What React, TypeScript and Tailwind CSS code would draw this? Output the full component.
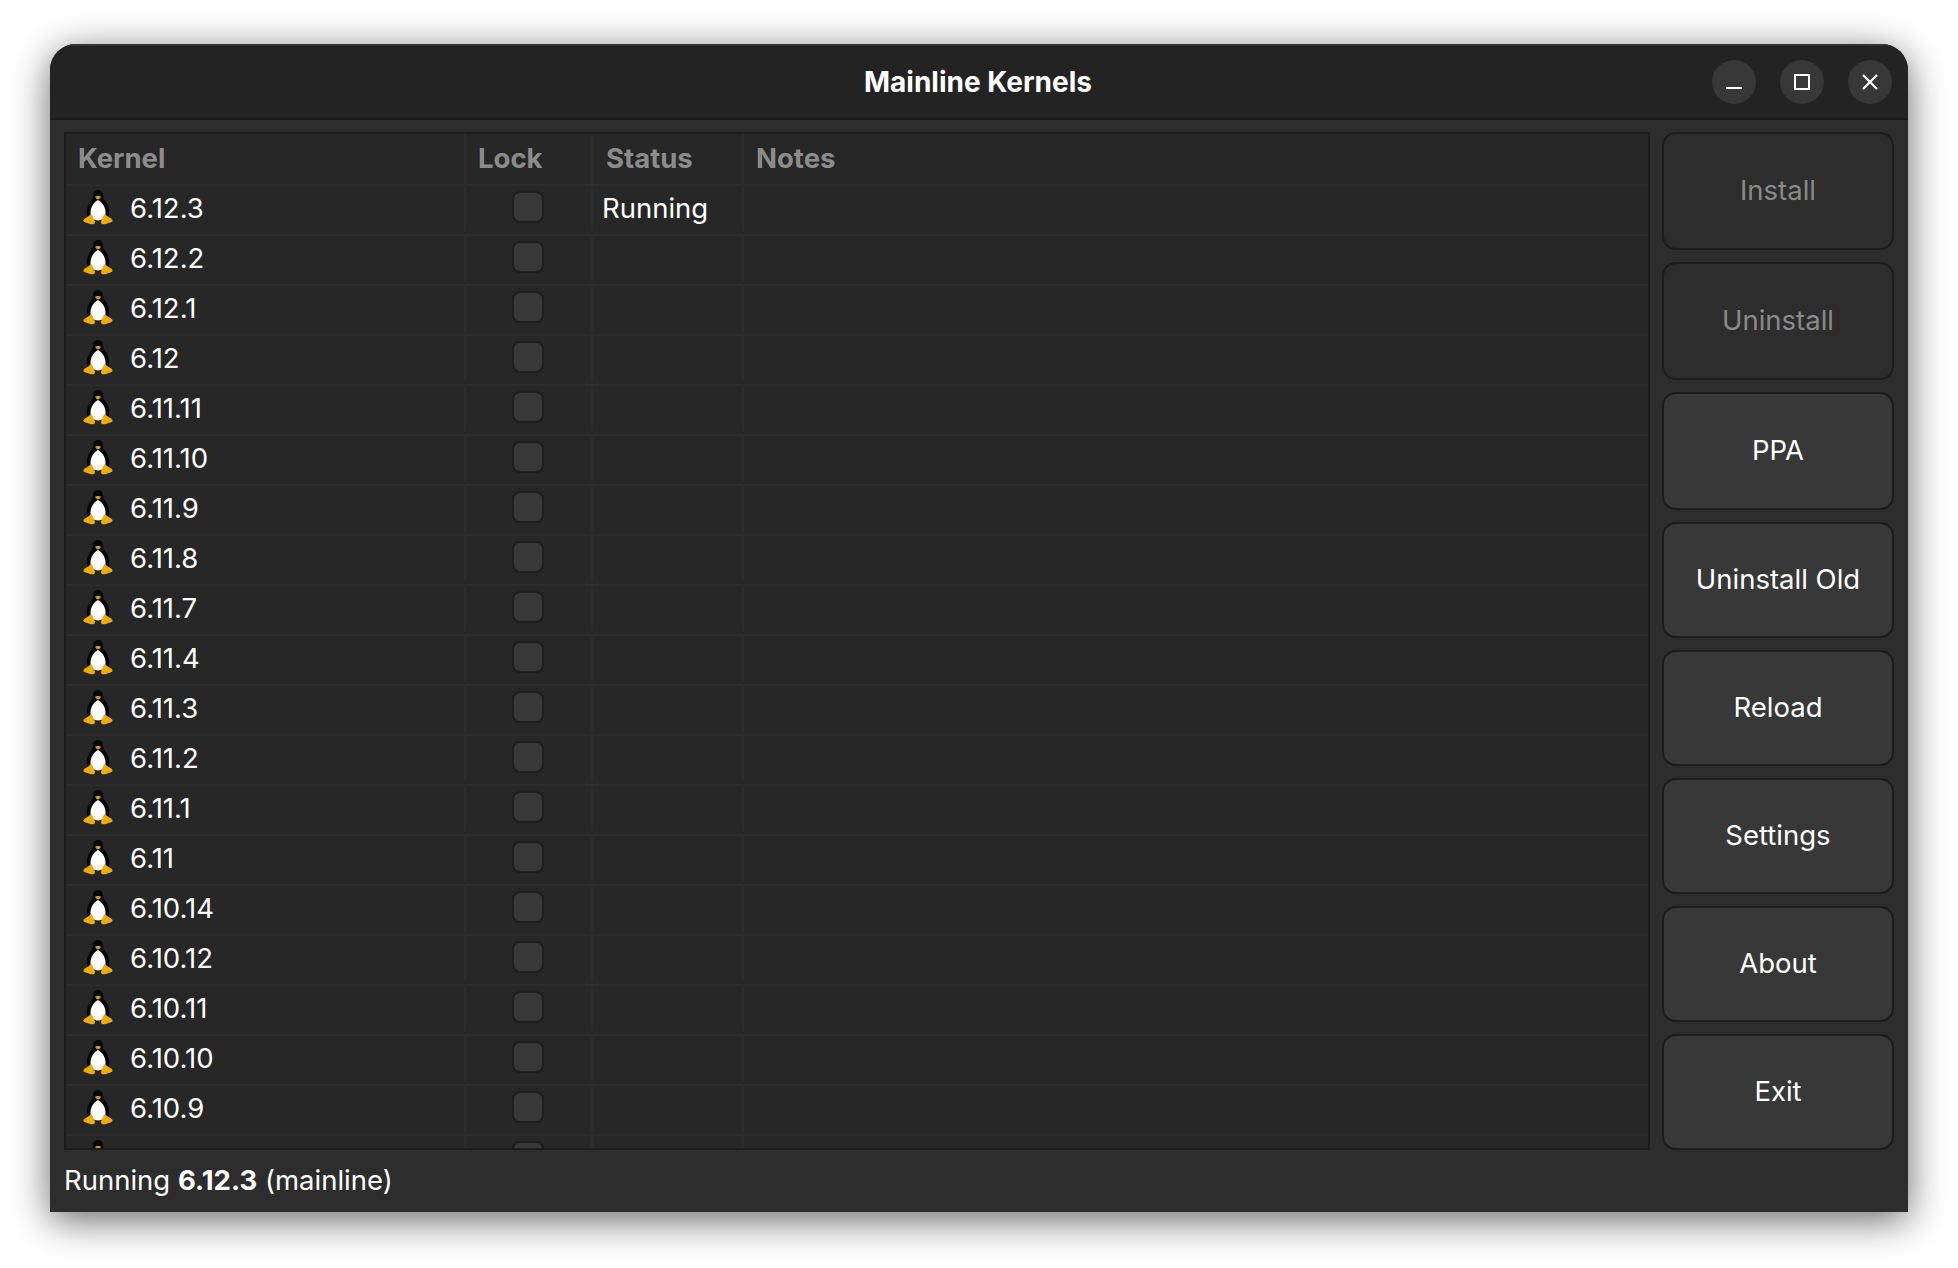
import React from "react";

const kernels = ["6.12.3","6.12.2","6.12.1","6.12","6.11.11","6.11.10","6.11.9","6.11.8","6.11.7","6.11.4","6.11.3","6.11.2","6.11.1","6.11","6.10.14","6.10.12","6.10.11","6.10.10","6.10.9","6.10.8"];

const buttons: { label: string; disabled?: boolean; h: string }[] = [
  { label: "Install", disabled: true, h: "h-[118px]" },
  { label: "Uninstall", disabled: true, h: "h-[118px]" },
  { label: "PPA", h: "h-[118px]" },
  { label: "Uninstall Old", h: "h-[116px]" },
  { label: "Reload", h: "h-[116px]" },
  { label: "Settings", h: "h-[116px]" },
  { label: "About", h: "h-[116px]" },
  { label: "Exit", h: "h-[116px]" },
];

function Tux() {
  return (
    <svg width="32" height="36" viewBox="0 0 32 36" className="mb-[4px] shrink-0 blur-[0.5px]">
      <path d="M16 1c-3 0-5 2.300-5 5.200 0 2.300-.8 3.800-2.200 5.600C6.600 14.800 4.500 19 4.800 24.500c.2 2.800 1.500 5.300 3.700 7h15c2.200-1.700 3.500-4.200 3.700-7 .3-5.500-1.800-9.700-4-12.700C21.800 10 21 8.500 21 6.200 21 3.300 19 1 16 1z" fill="#060606" />
      <path d="M16 11c-3.200 1.300-7.500 6.500-7.500 12.500 0 4.700 3 8 7.500 8s7.500-3.300 7.500-8C23.500 17.500 19.200 12.300 16 11z" fill="#fdfdfd" />
      <path d="M13.300 7.500c1-.7 4.400-.7 5.400 0 .3 1-1.700 3-2.700 3s-3-2-2.700-3z" fill="#d9a012" />
      <path d="M8.500 25.500C7 27.300 4.500 28.300 2.500 29.700.8 31 1 32.700 3.500 33.500c2.700.8 5 1.800 7 1.800 2.200 0 3-1.500 2.200-3.500-.8-2-1.800-4.300-2.700-5.800-.5-.9-1.400-1.200-1.500-.5z" fill="#eeab0a" />
      <path d="M23.500 25.500c1.500 1.800 4 2.800 6 4.200 1.700 1.300 1.500 3-1 3.800-2.700.8-5 1.800-7 1.800-2.200 0-3-1.500-2.200-3.500.8-2 1.800-4.300 2.700-5.800.5-.9 1.400-1.200 1.500-.5z" fill="#eeab0a" />
    </svg>
  );
}

function Row({ name, status }: { name: string; status?: string }) {
  return (
    <div className="flex h-[50px] shrink-0 border-b-2 border-[#2d2d2d] pb-[3px]">
      <div className="flex w-[400px] shrink-0 items-center gap-[16px] border-r-2 border-[#2c2c2c] pl-[16px]">
        <Tux />
        <span>{name}</span>
      </div>
      <div className="flex w-[127px] shrink-0 items-center justify-center border-r-2 border-[#2c2c2c] pr-[2px]">
        <div className="mb-[3px] h-[32px] w-[32px] rounded-lg border-2 border-[#1e1e1e] bg-[#383838]" />
      </div>
      <div className="flex w-[151px] shrink-0 items-center border-r-2 border-[#2c2c2c] pl-[9px]">{status}</div>
      <div className="flex-1" />
    </div>
  );
}

export default function App() {
  return (
    <div className="h-[1268px] w-[1958px] overflow-hidden bg-white pl-[50px] pt-[44px] font-['Inter',sans-serif] text-[27.5px] leading-none text-white">
      <div className="flex h-[1168px] w-[1858px] flex-col overflow-hidden rounded-t-[26px] bg-[#2d2d2d] shadow-[0_8px_38px_rgba(0,0,0,0.6)]">
        <header className="relative flex h-[76px] shrink-0 items-center justify-center border-b-2 border-[#1a1a1a] bg-[#232323] pt-[2px] pr-[2px] shadow-[inset_0_2px_0_#333333]">
          <h1 className="text-[28px] font-bold">Mainline Kernels</h1>
          <div className="absolute right-[16px] top-[16px] flex gap-[24px]">
            <div className="flex h-[44px] w-[44px] items-center justify-center rounded-full bg-[#383838]">
              <svg width="16" height="16" viewBox="0 0 16 16"><path d="M0 14h16" stroke="white" strokeWidth="2" /></svg>
            </div>
            <div className="flex h-[44px] w-[44px] items-center justify-center rounded-full bg-[#383838]">
              <svg width="16" height="16" viewBox="0 0 16 16"><path d="M1 1h14v14H1z" fill="none" stroke="white" strokeWidth="2" /></svg>
            </div>
            <div className="flex h-[44px] w-[44px] items-center justify-center rounded-full bg-[#383838]">
              <svg width="16" height="16" viewBox="0 0 16 16"><path d="M1 1l14 14M15 1L1 15" stroke="white" strokeWidth="2.200" /></svg>
            </div>
          </div>
        </header>
        <div className="flex min-h-0 flex-1 gap-[12px] pl-[14px] pt-[12px]">
          <div className="flex h-[1018px] w-[1586px] shrink-0 flex-col overflow-hidden border-2 border-[#1c1c1c] bg-[#272727]">
            <div className="flex h-[52px] shrink-0 border-b-2 border-[#2d2d2d] font-bold text-[#8c8c8c]">
              <div className="flex w-[400px] shrink-0 items-center border-r-2 border-[#2c2c2c] pl-[12px]">Kernel</div>
              <div className="flex w-[127px] shrink-0 items-center border-r-2 border-[#2c2c2c] pl-[12px]">Lock</div>
              <div className="flex w-[151px] shrink-0 items-center border-r-2 border-[#2c2c2c] pl-[13px]">Status</div>
              <div className="flex flex-1 items-center pl-[12px]">Notes</div>
            </div>
            {kernels.map((k, i) => (
              <Row key={k} name={k} status={i === 0 ? "Running" : undefined} />
            ))}
          </div>
          <div className="flex w-[232px] shrink-0 flex-col gap-[12px]">
            {buttons.map((b) => (
              <button
                key={b.label}
                className={
                  b.disabled
                    ? "flex w-full items-center justify-center rounded-[14px] border-2 border-[#1c1c1c] bg-[#2d2d2d] pb-[1px] text-[#8a8a8a] " + b.h
                    : "flex w-full items-center justify-center rounded-[14px] border-2 border-[#1c1c1c] bg-[#383838] text-white " + b.h
                }
              >
                {b.label}
              </button>
            ))}
          </div>
        </div>
        <footer className="flex h-[62px] shrink-0 items-center pb-[1px] pl-[14px]">
          <span className="whitespace-pre text-[27.5px]">
            Running <b className="font-bold">6.12.3</b> (mainline)
          </span>
        </footer>
      </div>
    </div>
  );
}
